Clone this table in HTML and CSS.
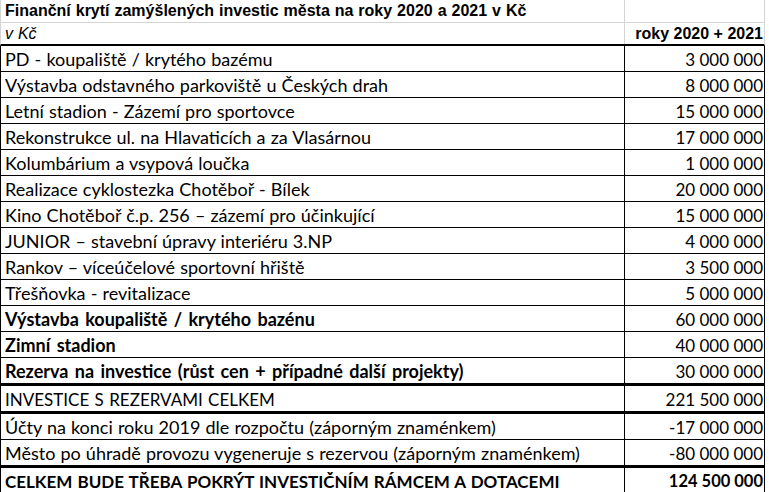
FILE: index.html
```html
<!DOCTYPE html>
<html lang="cs">
<head>
<meta charset="utf-8">
<title>Finanční krytí investic</title>
<link rel="stylesheet" href="styles.css">
</head>
<body>
<div class="sheet">
  <div class="row head first">
    <div class="c1 title">Finanční krytí zamýšlených investic města na roky 2020 a 2021 v Kč</div>
    <div class="c2"></div>
  </div>
  <div class="row head second">
    <div class="c1 unit">v Kč</div>
    <div class="c2 colhead">roky 2020 + 2021</div>
  </div>
  <div class="row"><div class="c1">PD - koupaliště / krytého bazému</div><div class="c2">3 000 000</div></div>
  <div class="row"><div class="c1">Výstavba odstavného parkoviště u Českých drah</div><div class="c2">8 000 000</div></div>
  <div class="row"><div class="c1">Letní stadion - Zázemí pro sportovce</div><div class="c2">15 000 000</div></div>
  <div class="row"><div class="c1">Rekonstrukce ul. na Hlavaticích a za Vlasárnou</div><div class="c2">17 000 000</div></div>
  <div class="row"><div class="c1">Kolumbárium a vsypová loučka</div><div class="c2">1 000 000</div></div>
  <div class="row"><div class="c1">Realizace cyklostezka Chotěboř - Bílek</div><div class="c2">20 000 000</div></div>
  <div class="row"><div class="c1">Kino Chotěboř č.p. 256 – zázemí pro účinkující</div><div class="c2">15 000 000</div></div>
  <div class="row"><div class="c1">JUNIOR – stavební úpravy interiéru 3.NP</div><div class="c2">4 000 000</div></div>
  <div class="row"><div class="c1">Rankov – víceúčelové sportovní hřiště</div><div class="c2">3 500 000</div></div>
  <div class="row"><div class="c1">Třešňovka - revitalizace</div><div class="c2">5 000 000</div></div>
  <div class="row"><div class="c1 strong">Výstavba koupaliště / krytého bazénu</div><div class="c2">60 000 000</div></div>
  <div class="row"><div class="c1 strong">Zimní stadion</div><div class="c2">40 000 000</div></div>
  <div class="row thick"><div class="c1 strong">Rezerva na investice (růst cen + případné další projekty)</div><div class="c2">30 000 000</div></div>
  <div class="row thick"><div class="c1 caps">INVESTICE S REZERVAMI CELKEM</div><div class="c2">221 500 000</div></div>
  <div class="row"><div class="c1">Účty na konci roku 2019 dle rozpočtu (záporným znaménkem)</div><div class="c2">-17 000 000</div></div>
  <div class="row thick"><div class="c1">Město po úhradě provozu vygeneruje s rezervou (záporným znaménkem)</div><div class="c2">-80 000 000</div></div>
  <div class="row thick"><div class="c1 strong caps">CELKEM BUDE TŘEBA POKRÝT INVESTIČNÍM RÁMCEM A DOTACEMI</div><div class="c2 strong total">124 500 000</div></div>
</div>
</body>
</html>
```
FILE: styles.css
```css
html, body {
  margin: 0;
  padding: 0;
  background: #ffffff;
}

.sheet {
  width: 765px;
  color: #000000;
  font-family: Lato, "Noto Sans", sans-serif;
  font-size: 18px;
}

.row {
  display: grid;
  grid-template-columns: 624px 1fr;
  height: 26px;
  box-sizing: border-box;
  border-left: 1px solid #000;
  border-right: 1px solid #000;
  border-bottom: 1px solid #000;
}

.row.thick {
  border-bottom-width: 3px;
  height: 28px;
}

.c1, .c2 {
  display: flex;
  align-items: center;
  white-space: nowrap;
  overflow: hidden;
  padding-top: 1px;
}

.c1 {
  box-sizing: border-box;
  border-right: 1px solid #000;
  padding-left: 4px;
  word-spacing: 0.5px;
}

.c2 {
  justify-content: flex-end;
  padding-right: 1px;
  font-size: 17px;
}

.strong {
  font-weight: 700;
}

.c1.strong {
  word-spacing: 2px;
}

.c1.caps {
  font-size: 17px;
  word-spacing: 1px;
}

.c2.total {
  font-size: 16.5px;
}

.head {
  height: 23px;
  border-left-color: #d4d4d4;
  border-right-color: #d4d4d4;
  border-bottom-color: #d4d4d4;
  font-family: "Liberation Sans", Arial, sans-serif;
  font-size: 16px;
}

.head .c1 {
  border-right-color: #d4d4d4;
  padding-top: 0;
}

.head .c2 {
  font-size: 16px;
  padding-top: 0;
}

.head.second {
  border-bottom: 2px solid #000;
}

.title {
  font-weight: 700;
}

.unit {
  font-style: italic;
}

.colhead {
  font-weight: 700;
}
```
